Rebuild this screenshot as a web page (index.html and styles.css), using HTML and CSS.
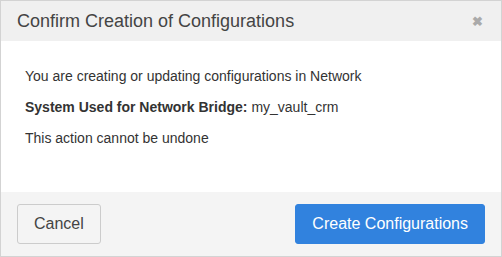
FILE: index.html
```html
<!DOCTYPE html>
<html lang="en">
  <head>
    <meta charset="UTF-8" />
    <title>Confirm Creation of Configurations</title>
    <link rel="stylesheet" href="styles.css">
  </head>
  <body>
    <!-- ===== MODAL ===== -->
    <div class="modal">
      <header class="modal-head">
        <h2>Confirm Creation of Configurations</h2>
        <button class="close" aria-label="close">&#10006;</button>
      </header>
      <div class="modal-body">
        <p>You are creating or updating configurations in Network</p>
        <p><strong>System Used for Network Bridge:</strong> my_vault_crm</p>
        <p>This action cannot be undone</p>
      </div>
      <footer class="modal-foot">
        <button class="btn">Cancel</button>
        <button class="btn btn-primary">Create Configurations</button>
      </footer>
    </div>
  </body>
</html>
```

FILE: styles.css
```css
:root {
  /* palette */
  --c-border: #d3d3d3;
  --c-head: #f0f0f0;
  --c-foot: #f4f4f4;
  --c-text: #333;
  --c-primary: #3182de;
}
*,*::before,*::after{box-sizing:border-box;margin:0;padding:0}
html,body{height:100%;background:#fff;font-family:"Liberation Sans",Arial,sans-serif;color:var(--c-text)}

/* ===== MODAL ===== */
.modal{height:257px;border:1px solid var(--c-border);display:flex;flex-direction:column}
.modal-head{height:40px;background:var(--c-head);display:flex;align-items:center;justify-content:space-between;padding:0 18px 0 16px}
.modal-head h2{font-size:18px;font-weight:400;color:#444}
.close{background:none;border:none;color:#aaa;font-size:13px;font-weight:700;cursor:pointer}

.modal-body{flex:1;padding:27px 24px 16px;display:flex;flex-direction:column;gap:14px;font-size:14px;line-height:17px}

.modal-foot{height:64px;background:var(--c-foot);display:flex;align-items:center;justify-content:space-between;padding:0 16px}
.btn{height:40px;padding:0 16px;font:16px "Liberation Sans",Arial,sans-serif;color:#444;background:#f4f4f4;border:1px solid #ccc;border-radius:3px;cursor:pointer}
.btn-primary{background:var(--c-primary);border-color:var(--c-primary);color:#fff}
```
